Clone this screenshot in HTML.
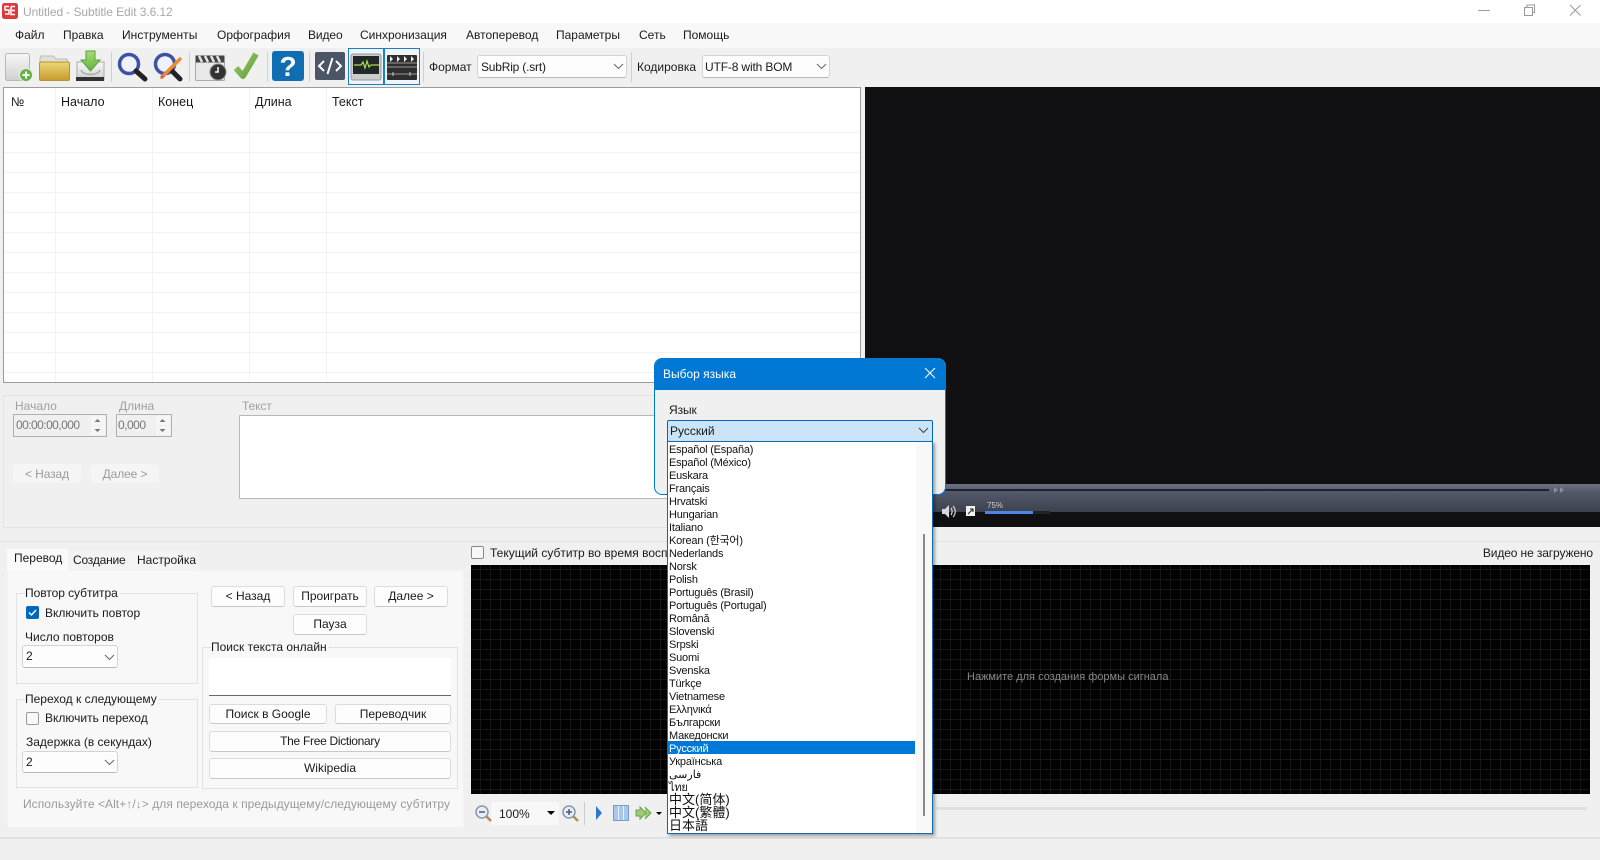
<!DOCTYPE html>
<html lang="ru">
<head>
<meta charset="utf-8">
<title>Untitled - Subtitle Edit 3.6.12</title>
<style>
html,body{margin:0;padding:0;width:1600px;height:860px;overflow:hidden;background:#f0f0f0;font-family:"Liberation Sans","Noto Sans CJK SC",sans-serif;font-size:12px;color:#1a1a1a}
div,span,svg{position:absolute;box-sizing:border-box}
.t{white-space:nowrap;line-height:16px;height:16px}
.btn{background:#fdfdfd;border:1px solid #dcdcdc;border-bottom-color:#c8c8c8;border-radius:3px;text-align:center;line-height:19px;white-space:nowrap}
.dis{background:#f5f5f5;border:0;color:#9a9a9a;line-height:20px;letter-spacing:-.1px}
.combo{background:#fdfdfd;border:1px solid #d4d4d4;border-bottom-color:#b8b8b8;border-radius:3px;line-height:21px;padding-left:3px}
.gb{border:1px solid #e2e2e2}
.lab{background:#f8f8f8;padding:0 2px 0 0}
.vl{width:1px;background:#f2f2f2}
.hl{height:1px;background:#f2f2f2;left:4px;width:856px}
.i{white-space:nowrap;left:1px;height:13px;line-height:16px;font-size:11px;letter-spacing:-.2px;color:#111}
.c{line-height:13px;font-size:13px;letter-spacing:0}
</style>
</head>
<body>
<!-- title bar -->
<div style="left:0;top:0;width:1600px;height:23px;background:#fff"></div>
<svg style="left:0;top:0" width="1600" height="23">
<rect x="2" y="3" width="16" height="16" rx="2.500" fill="#dd3a3e"/>
<path d="M9 6.500H5v3.500h4v4H5M11 6.500h4M11 10.500h4M11 6.500v8h4" fill="none" stroke="#fff" stroke-width="1.500"/>
<path d="M1478 10.500h12" stroke="#999" stroke-width="1"/>
<path d="M1524.500 7.500h8v8h-8zM1527 7.500v-2.500h7.500v7.500h-2" fill="none" stroke="#999" stroke-width="1"/>
<path d="M1570 5l10.500 10.500M1580.500 5l-10.500 10.500" fill="none" stroke="#999" stroke-width="1"/>
</svg>
<div class="t" style="left:23px;top:4px;color:#a8a8a8;font-size:12px;letter-spacing:-.08px">Untitled - Subtitle Edit 3.6.12</div>

<!-- menu -->
<div style="left:0;top:23px;width:1600px;height:25px;background:#f8f8f8"></div>
<div class="t" style="left:15px;top:27px">Файл</div>
<div class="t" style="left:63px;top:27px">Правка</div>
<div class="t" style="left:122px;top:27px;letter-spacing:.05px">Инструменты</div>
<div class="t" style="left:217px;top:27px">Орфография</div>
<div class="t" style="left:308px;top:27px;letter-spacing:-.1px">Видео</div>
<div class="t" style="left:360px;top:27px">Синхронизация</div>
<div class="t" style="left:466px;top:27px">Автоперевод</div>
<div class="t" style="left:556px;top:27px">Параметры</div>
<div class="t" style="left:639px;top:27px">Сеть</div>
<div class="t" style="left:683px;top:27px">Помощь</div>

<!-- toolbar icons -->
<svg style="left:0;top:0" width="640" height="90">
<defs>
<linearGradient id="g1" x1="0" y1="0" x2="0" y2="1"><stop offset="0" stop-color="#f8f8f8"/><stop offset="1" stop-color="#d0d0d0"/></linearGradient>
<linearGradient id="g2" x1="0" y1="0" x2="0" y2="1"><stop offset="0" stop-color="#eed678"/><stop offset="1" stop-color="#c49c2c"/></linearGradient>
<linearGradient id="g3" x1="0" y1="0" x2="0" y2="1"><stop offset="0" stop-color="#a8dc74"/><stop offset="1" stop-color="#63b23e"/></linearGradient>
<linearGradient id="g4" x1="0" y1="0" x2="1" y2="1"><stop offset="0" stop-color="#a0c860"/><stop offset="1" stop-color="#5fa040"/></linearGradient>
</defs>
<!-- new -->
<rect x="5.500" y="53.500" width="24" height="27" rx="2" fill="url(#g1)" stroke="#b8b8b8"/>
<circle cx="26" cy="75" r="6.500" fill="#66b04a" stroke="#e8f4e0"/>
<path d="M26 71.500v7M22.500 75h7" stroke="#fff" stroke-width="2"/>
<!-- folder -->
<path d="M40 59l1-3h12l3 3h11l1 3H40z" fill="#e0e0d8" stroke="#bcbcac"/>
<rect x="39.500" y="62" width="30" height="18.500" rx="1.500" fill="url(#g2)" stroke="#b59530"/>
<!-- download -->
<path d="M77 62h27v18H77z" fill="url(#g1)" stroke="#aaa"/>
<rect x="76" y="77" width="28" height="4" fill="#333"/>
<path d="M81 70c2 6 17 6 19 0" fill="none" stroke="#aaa" stroke-width="1.500"/>
<path d="M86 51h9v9h5l-9.500 11L81 60h5z" fill="url(#g3)" stroke="#5aa23a"/>
<!-- search -->
<circle cx="129" cy="64" r="9.500" fill="#eef2fb" stroke="#3d52a6" stroke-width="3.500"/>
<path d="M136 71l9 8" stroke="#222" stroke-width="5" stroke-linecap="round"/>
<!-- search edit -->
<circle cx="165" cy="64" r="9.500" fill="#eef2fb" stroke="#3d52a6" stroke-width="3.500"/>
<path d="M172 71l8 8" stroke="#222" stroke-width="5" stroke-linecap="round"/>
<path d="M181 58l-20 20" stroke="#ef8a2c" stroke-width="3.500"/>
<path d="M160 79l2-5 3 3z" fill="#c66"/>
<!-- clapper -->
<rect x="195.500" y="62" width="29" height="18.500" rx="1" fill="#e8e8e8" stroke="#aaa"/>
<rect x="195.500" y="55.500" width="29" height="7" fill="#444"/>
<path d="M199 56l3 6M205 56l3 6M211 56l3 6M217 56l3 6" stroke="#e4e4e4" stroke-width="2.500"/>
<circle cx="218" cy="72" r="8" fill="#333" stroke="#888"/>
<path d="M218 67v5h-3" fill="none" stroke="#fff" stroke-width="1.500"/>
<!-- check -->
<path d="M236 68l7 8 13-22" fill="none" stroke="url(#g4)" stroke-width="6" stroke-linejoin="round"/>
<!-- help -->
<rect x="272" y="51" width="32" height="30" rx="3" fill="#0f6db2"/>
<text x="288" y="76" text-anchor="middle" font-family="Liberation Sans" font-weight="bold" font-size="28" fill="#fff">?</text>
<!-- code -->
<rect x="315" y="52" width="30" height="28" rx="2" fill="#4b5566"/>
<path d="M324 61l-5 5 5 5M336 61l5 5-5 5M332.500 58l-5 16" fill="none" stroke="#fff" stroke-width="2"/>
<!-- wave -->
<rect x="348.500" y="48.500" width="35" height="36" fill="#eef4f9" stroke="#1b7fc4"/>
<rect x="351" y="54" width="30" height="26" rx="2" fill="#ccc" stroke="#999"/>
<rect x="353" y="56" width="26" height="18" fill="#23282a"/>
<path d="M354 65h7l2-3 2 6 2-7 2 6 2-2h8" fill="none" stroke="#a8e04c" stroke-width="1.200"/>
<!-- film -->
<rect x="384.500" y="48.500" width="35" height="36" fill="#eef4f9" stroke="#1b7fc4"/>
<rect x="387" y="55" width="30" height="25" rx="1" fill="#2e2e2e"/>
<path d="M390 56l3 3-3 3zM397 56l3 3-3 3zM404 56l3 3-3 3zM411 56l3 3-3 3z" fill="#eee"/>
<path d="M387 63h30M387 67h30M387 74h30" stroke="#999" stroke-width="1"/>
<path d="M393 72v4M410 72v4" stroke="#ccc" stroke-width="1"/>
<!-- separators -->
<path d="M111.500 52v30M189.500 52v30M267.500 52v30M309.500 52v30M423.500 52v30M631.500 52v30" stroke="#cfcfcf"/>
</svg>

<div class="t" style="left:429px;top:59px">Формат</div>
<div class="combo" style="left:477px;top:55px;width:150px;height:23px;letter-spacing:-.2px;line-height:22px">SubRip (.srt)</div>
<div class="t" style="left:637px;top:59px">Кодировка</div>
<div class="combo" style="left:702px;top:55px;width:128px;height:23px;padding-left:2px;letter-spacing:-.15px;line-height:22px">UTF-8 with BOM</div>
<svg style="left:0;top:0" width="840" height="90"><path d="M614 64l4.500 4.500 4.500-4.500M817 64l4.500 4.500 4.500-4.500" fill="none" stroke="#666"/></svg>

<!-- subtitle grid -->
<div style="left:3px;top:87px;width:858px;height:296px;background:#fff;border:1px solid #9c9c9c"></div>
<div class="hl" style="top:132px"></div><div class="hl" style="top:152px"></div><div class="hl" style="top:172px"></div><div class="hl" style="top:192px"></div><div class="hl" style="top:212px"></div><div class="hl" style="top:232px"></div><div class="hl" style="top:252px"></div><div class="hl" style="top:272px"></div><div class="hl" style="top:292px"></div><div class="hl" style="top:312px"></div><div class="hl" style="top:332px"></div><div class="hl" style="top:352px"></div><div class="hl" style="top:372px"></div>
<div class="vl" style="left:55px;top:88px;height:294px"></div>
<div class="vl" style="left:152px;top:88px;height:294px"></div>
<div class="vl" style="left:249px;top:88px;height:294px"></div>
<div class="vl" style="left:326px;top:88px;height:294px"></div>
<div class="t" style="left:11px;top:94px;font-size:12.500px">№</div>
<div class="t" style="left:61px;top:94px;font-size:12.500px">Начало</div>
<div class="t" style="left:158px;top:94px;font-size:12.500px">Конец</div>
<div class="t" style="left:255px;top:94px;font-size:12.500px">Длина</div>
<div class="t" style="left:332px;top:94px;font-size:12.500px">Текст</div>

<!-- edit panel -->
<div style="left:3px;top:395px;width:862px;height:133px;border:1px solid #e4e4e4"></div>
<div class="t" style="left:15px;top:398px;color:#a0a0a0">Начало</div>
<div class="t" style="left:119px;top:398px;color:#a0a0a0">Длина</div>
<div class="t" style="left:242px;top:398px;color:#a0a0a0;letter-spacing:-.1px">Текст</div>
<div style="left:13px;top:414px;width:94px;height:23px;border:1px solid #b0b0b0;background:#f0f0f0;color:#777;line-height:20px;padding-left:2px;letter-spacing:-.55px">00:00:00,000</div>
<div style="left:116px;top:414px;width:56px;height:23px;border:1px solid #b0b0b0;background:#f0f0f0;color:#777;line-height:20px;padding-left:1px;letter-spacing:-.5px">0,000</div>
<svg style="left:0;top:410px" width="180" height="30">
<rect x="91" y="6" width="14" height="9" fill="#f6f6f6"/><rect x="91" y="16" width="14" height="9" fill="#f6f6f6"/>
<rect x="156" y="6" width="14" height="9" fill="#f6f6f6"/><rect x="156" y="16" width="14" height="9" fill="#f6f6f6"/>
<path d="M97.500 9l-3 3h6zM97.500 22l-3-3h6zM162.500 9l-3 3h6zM162.500 22l-3-3h6z" fill="#777"/>
</svg>
<div style="left:239px;top:415px;width:440px;height:84px;background:#fff;border:1px solid #b8b8b8"></div>
<div class="btn dis" style="left:13px;top:464px;width:68px;height:19px">&lt; Назад</div>
<div class="btn dis" style="left:91px;top:464px;width:68px;height:19px">Далее &gt;</div>

<!-- video -->
<div style="left:865px;top:87px;width:735px;height:440px;background:#101013"></div>
<div style="left:865px;top:484px;width:735px;height:28px;background:linear-gradient(#6b7180 0,#525868 30%,#3d424f 100%)"></div>
<div style="left:940px;top:489px;width:609px;height:2px;background:#1c2230"></div>
<svg style="left:930px;top:486px" width="670" height="41">
<path d="M624 1l4 3-4 3zM630 1l4 3-4 3z" fill="#8a90a0"/>
<path d="M12 23h3l4-4v13l-4-4h-3z" fill="#d8d8d8"/>
<path d="M21 22c1.500 2 1.500 5 0 7M23 20c3 3 3 8 0 11" fill="none" stroke="#d8d8d8" stroke-width="1.200"/>
<rect x="36" y="20" width="9" height="10" fill="#f0f0f0"/>
<path d="M38 28l5-5M40 23h3v3" fill="none" stroke="#222"/>
<rect x="55" y="25" width="65" height="3" fill="#222"/>
<rect x="55" y="25" width="48" height="3" fill="#4c84e8"/>
</svg>
<div class="t" style="left:987px;top:498px;font-size:8px;color:#ccc">75%</div>

<!-- tabs -->
<div style="left:0;top:541px;width:1600px;height:1px;background:#e2e2e2"></div>
<div style="left:7px;top:570px;width:457px;height:258px;background:#f8f8f8;border:1px solid #f2f2f2"></div>
<div style="left:7px;top:549px;width:61px;height:22px;background:#fafafa"></div>
<div style="left:68px;top:551px;width:131px;height:19px;background:#f3f3f3"></div>
<div class="t" style="left:14px;top:550px">Перевод</div>
<div class="t" style="left:73px;top:552px;letter-spacing:-.2px">Создание</div>
<div class="t" style="left:137px;top:552px">Настройка</div>

<div class="gb" style="left:16px;top:593px;width:182px;height:91px"></div>
<div class="t lab" style="left:25px;top:585px;letter-spacing:-.05px">Повтор субтитра</div>
<div style="left:26px;top:606px;width:13px;height:13px;background:#0067c0;border-radius:2px"></div>
<svg style="left:26px;top:606px" width="13" height="13"><path d="M3 6.500l2.500 2.500 4.500-5" fill="none" stroke="#fff" stroke-width="1.400"/></svg>
<div class="t" style="left:45px;top:605px">Включить повтор</div>
<div class="t" style="left:25px;top:629px">Число повторов</div>
<div class="combo" style="left:22px;top:645px;width:96px;height:23px">2</div>

<div class="gb" style="left:16px;top:699px;width:182px;height:89px"></div>
<div class="t lab" style="left:25px;top:691px">Переход к следующему</div>
<div style="left:26px;top:712px;width:13px;height:13px;background:#f8f8f8;border:1px solid #9a9a9a;border-radius:2px"></div>
<div class="t" style="left:45px;top:710px">Включить переход</div>
<div class="t" style="left:26px;top:734px">Задержка (в секундах)</div>
<div class="combo" style="left:22px;top:751px;width:96px;height:22px">2</div>
<svg style="left:0;top:640px" width="130" height="140"><path d="M105 15l4.500 4.500 4.500-4.500M105 120l4.500 4.500 4.500-4.500" fill="none" stroke="#666"/></svg>

<div class="btn" style="left:211px;top:586px;width:74px;height:21px">&lt; Назад</div>
<div class="btn" style="left:293px;top:586px;width:74px;height:21px;letter-spacing:-.05px">Проиграть</div>
<div class="btn" style="left:374px;top:586px;width:74px;height:21px">Далее &gt;</div>
<div class="btn" style="left:293px;top:614px;width:74px;height:21px">Пауза</div>

<div class="gb" style="left:202px;top:647px;width:256px;height:142px"></div>
<div class="t lab" style="left:211px;top:639px">Поиск текста онлайн</div>
<div style="left:209px;top:658px;width:242px;height:38px;background:#fff;border-bottom:1px solid #6a6a6a"></div>
<div class="btn" style="left:209px;top:704px;width:118px;height:20px;line-height:18px">Поиск в Google</div>
<div class="btn" style="left:335px;top:704px;width:116px;height:20px;line-height:18px">Переводчик</div>
<div class="btn" style="left:209px;top:731px;width:242px;height:21px;letter-spacing:-.3px">The Free Dictionary</div>
<div class="btn" style="left:209px;top:758px;width:242px;height:21px">Wikipedia</div>
<div class="t" style="left:23px;top:796px;color:#9a9a9a;letter-spacing:.06px">Используйте &lt;Alt+↑/↓&gt; для перехода к предыдущему/следующему субтитру</div>

<!-- waveform -->
<div style="left:471px;top:546px;width:13px;height:13px;background:#f8f8f8;border:1px solid #8a8a8a;border-radius:2px"></div>
<div class="t" style="left:490px;top:545px">Текущий субтитр во время воспроизведения</div>
<div class="t" style="right:7px;top:545px;letter-spacing:-.12px">Видео не загружено</div>
<div style="left:471px;top:565px;width:1119px;height:229px;background-color:#020202;background-image:linear-gradient(#161616 1px,transparent 1px),linear-gradient(90deg,#161616 1px,transparent 1px);background-size:10px 10px;background-position:-1px 4px"></div>
<div class="t" style="left:967px;top:669px;color:#8a8a8a;font-size:11px">Нажмите для создания формы сигнала</div>
<div style="left:936px;top:807px;width:651px;height:3px;background:#e0e0e0"></div>

<!-- zoom bar -->
<div style="left:491px;top:802px;width:68px;height:23px;background:#f8f8f8"></div>
<div class="t" style="left:499px;top:806px">100%</div>
<svg style="left:460px;top:796px" width="210" height="40">
<circle cx="22" cy="16" r="6" fill="#e8eef5" stroke="#8a98a8" stroke-width="1.500"/><path d="M19 16h6" stroke="#556" stroke-width="1.500"/><path d="M26.500 20.500l4.500 4.500" stroke="#b09050" stroke-width="2.500"/>
<path d="M87 15h8l-4 4z" fill="#000"/>
<circle cx="109" cy="16" r="6" fill="#e8eef5" stroke="#8a98a8" stroke-width="1.500"/><path d="M106 16h6M109 13v6" stroke="#557" stroke-width="1.500"/><path d="M113.500 20.500l4.500 4.500" stroke="#b09050" stroke-width="2.500"/>
<path d="M124.500 6v23" stroke="#ccc"/>
<path d="M136 10l6 7-6 7z" fill="#2f79c9"/>
<rect x="153.500" y="9.500" width="15" height="15" fill="#a6c8ee" stroke="#7a9cc4"/><path d="M158.500 10v14M163.500 10v14" stroke="#e8f0fa"/>
<path d="M176 14h4v-3l6 6-6 6v-3h-4zM185 11l6 6-6 6" fill="#9ccc78" stroke="#6ca34a"/>
<path d="M196 16h6l-3 3z" fill="#000"/>
</svg>

<!-- bottom lines -->
<div style="left:0;top:837px;width:1600px;height:2px;background:#e0e0e0"></div>

<!-- dialog -->
<div style="left:654px;top:358px;width:292px;height:137px;background:#f0f0f0;border:1px solid #0078d4;border-radius:8px;overflow:hidden">
<div style="left:-1px;top:-1px;width:292px;height:32px;background:#0078d4"></div>
</div>
<div class="t" style="left:663px;top:366px;color:#fff">Выбор языка</div>
<svg style="left:923px;top:366px" width="14" height="14"><path d="M2 2l10 10M12 2L2 12" fill="none" stroke="#fff" stroke-width="1.100"/></svg>
<div class="t" style="left:669px;top:402px;letter-spacing:-.1px">Язык</div>
<div style="left:667px;top:420px;width:266px;height:22px;background:#cce4f7;border:1px solid #0067c0;border-radius:2px;line-height:20px;padding-left:2px">Русский</div>
<svg style="left:917px;top:425px" width="16" height="12"><path d="M2 3l4.500 4.500L11 3" fill="none" stroke="#444"/></svg>

<!-- dropdown list -->
<div style="left:667px;top:441px;width:266px;height:393px;background:#fff;border:1px solid #0f6cb0;box-shadow:2px 2px 3px rgba(0,0,0,.35)">
<div style="left:0;top:299px;width:247px;height:13px;background:#0078d7"></div>
<div style="left:248px;top:0;width:16px;height:391px;background:#f8f8f8"></div>
<div style="left:255px;top:92px;width:2px;height:282px;background:#8a8a8a"></div>
<div class="i" style="top:0">Español (España)</div>
<div class="i" style="top:13px">Español (México)</div>
<div class="i" style="top:26px">Euskara</div>
<div class="i" style="top:39px">Français</div>
<div class="i" style="top:52px">Hrvatski</div>
<div class="i" style="top:65px">Hungarian</div>
<div class="i" style="top:78px">Italiano</div>
<div class="i" style="top:91px">Korean (한국어)</div>
<div class="i" style="top:104px">Nederlands</div>
<div class="i" style="top:117px">Norsk</div>
<div class="i" style="top:130px">Polish</div>
<div class="i" style="top:143px">Português (Brasil)</div>
<div class="i" style="top:156px">Português (Portugal)</div>
<div class="i" style="top:169px">Română</div>
<div class="i" style="top:182px">Slovenski</div>
<div class="i" style="top:195px">Srpski</div>
<div class="i" style="top:208px">Suomi</div>
<div class="i" style="top:221px">Svenska</div>
<div class="i" style="top:234px">Türkçe</div>
<div class="i" style="top:247px">Vietnamese</div>
<div class="i" style="top:260px">Ελληνικά</div>
<div class="i" style="top:273px">Български</div>
<div class="i" style="top:286px">Македонски</div>
<div class="i" style="top:299px;color:#fff">Русский</div>
<div class="i" style="top:312px">Українська</div>
<div class="i" style="top:325px">فارسی</div>
<div class="i" style="top:338px">ไทย</div>
<div class="i c" style="top:351px">中文(简体)</div>
<div class="i c" style="top:364px">中文(繁體)</div>
<div class="i c" style="top:377px">日本語</div>
</div>
</body>
</html>
